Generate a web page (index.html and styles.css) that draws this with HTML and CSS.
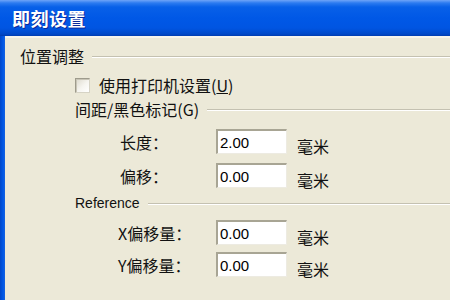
FILE: index.html
```html
<!DOCTYPE html>
<html lang="zh">
<head>
<meta charset="utf-8">
<title>即刻设置</title>
<link rel="stylesheet" href="styles.css">
</head>
<body>
<div class="window">
  <div class="titlebar">即刻设置</div>
  <div class="frame">
    <div class="edge"></div>
    <div class="content">
      <div class="legend legend-top"><span class="legend-text">位置调整</span><span class="rule"></span></div>
      <div class="check-row"><span class="checkbox"></span><span class="check-label">使用打印机设置(<u>U</u>)</span></div>
      <div class="legend legend-sub legend-gap"><span class="legend-text">间距/黑色标记(G)</span><span class="rule"></span></div>
      <div class="field field-first"><span class="label">长度：</span><span class="input">2.00</span><span class="unit">毫米</span></div>
      <div class="field field-next"><span class="label">偏移：</span><span class="input">0.00</span><span class="unit">毫米</span></div>
      <div class="legend legend-sub legend-ref"><span class="legend-text latin">Reference</span><span class="rule"></span></div>
      <div class="field field-ref"><span class="label label-wide">X偏移量：</span><span class="input">0.00</span><span class="unit">毫米</span></div>
      <div class="field field-ref"><span class="label label-wide">Y偏移量：</span><span class="input">0.00</span><span class="unit">毫米</span></div>
    </div>
  </div>
</div>
</body>
</html>
```

FILE: styles.css
```css
html, body {
  margin: 0;
  padding: 0;
  width: 450px;
  height: 300px;
  overflow: hidden;
  background: #ECE9D8;
}
.window {
  display: flex;
  flex-direction: column;
  width: 450px;
  height: 300px;
  font-family: "Liberation Sans", "Noto Sans CJK SC", sans-serif;
  font-size: 16px;
  color: #000;
}
.titlebar {
  height: 36px;
  flex: none;
  box-sizing: border-box;
  padding-left: 12px;
  line-height: 36px;
  color: #fff;
  font-family: "Noto Sans CJK SC", sans-serif;
  font-weight: bold;
  font-size: 18px;
  letter-spacing: 0.5px;
  text-shadow: 1px 1px 0 #0A2A9A;
  background: linear-gradient(to bottom, #6FA4F8 0px, #2C7BF0 3px, #0860E8 7px, #0058E6 18px, #0055E2 28px, #0048C8 34px, #003CB0 36px);
}
.frame {
  display: flex;
  flex: 1;
}
.edge {
  width: 5px;
  flex: none;
  background: linear-gradient(to right, #0046C8, #0058E6 60%, #1662E0);
}
.content {
  flex: 1;
  display: flex;
  flex-direction: column;
  background: #ECE9D8;
  border-top: 2px solid #F6F4EC;
}
.legend {
  display: flex;
  align-items: center;
  height: 20px;
  flex: none;
}
.legend-top {
  margin-top: 8px;
  padding-left: 15px;
}
.legend-sub {
  padding-left: 70px;
}
.legend-gap {
  margin-top: 4px;
}
.legend-ref {
  margin-top: 5px;
}
.legend-text {
  font-family: "Noto Sans CJK SC", sans-serif;
  font-size: 16px;
  line-height: 20px;
  color: #111;
}
.legend-text.latin {
  font-family: "Liberation Sans", sans-serif;
  font-size: 14px;
}
.rule {
  flex: 1;
  height: 1px;
  margin-left: 8px;
  margin-top: 1px;
  background: #C4C1B1;
  border-bottom: 1px solid #FFFFFF;
}
.check-row {
  display: flex;
  align-items: center;
  height: 19px;
  margin-top: 10px;
  padding-left: 70px;
  flex: none;
}
.checkbox {
  width: 15px;
  height: 15px;
  box-sizing: border-box;
  border: 1px solid #9E9B8C;
  border-right-color: #D6D3C5;
  border-bottom-color: #D6D3C5;
  box-shadow: inset 1px 1px 0 #C8C5B6;
  background: linear-gradient(135deg, #DCD9CC, #F6F5F0 55%, #FFFFFF);
}
.check-label {
  margin-left: 9px;
  font-family: "Noto Sans CJK SC", sans-serif;
  font-size: 16px;
  line-height: 19px;
  color: #111;
}
.field {
  display: flex;
  align-items: center;
  height: 25px;
  flex: none;
  padding-left: 115px;
}
.field-first {
  margin-top: 10px;
}
.field-next {
  margin-top: 9px;
}
.field-ref {
  margin-top: 7px;
}
.label {
  width: 96px;
  flex: none;
  font-family: "Noto Sans CJK SC", sans-serif;
  font-size: 16px;
  color: #111;
}
.label-wide {
  margin-left: -2px;
  width: 98px;
}
.input {
  width: 71px;
  height: 25px;
  box-sizing: border-box;
  flex: none;
  padding-left: 2px;
  line-height: 23px;
  font-family: "Liberation Sans", sans-serif;
  font-size: 15px;
  background: #FFFFFF;
  border-top: 2px solid #A8A594;
  border-left: 2px solid #A8A594;
  border-right: 1px solid #EDEBE2;
  border-bottom: 1px solid #EDEBE2;
}
.unit {
  margin-left: 10px;
  margin-top: 8px;
  font-family: "Noto Sans CJK SC", sans-serif;
  font-size: 16px;
  color: #111;
}
```
